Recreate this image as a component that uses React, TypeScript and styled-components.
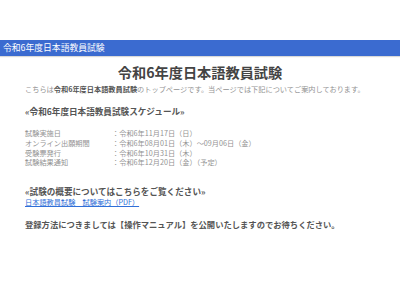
import { Fragment } from 'react'
import styled, { createGlobalStyle } from 'styled-components'

const GlobalStyle = createGlobalStyle`
  html, body {
    margin: 0;
    padding: 0;
    background: #ffffff;
  }
  body {
    font-family: "Noto Sans CJK JP", "Noto Sans", sans-serif;
  }
`

const Page = styled.div`
  width: 400px;
  height: 300px;
  padding-top: 40px;
  box-sizing: border-box;
  overflow: hidden;
`

const TopBar = styled.header`
  height: 16px;
  background-color: #3b6bd0;
  box-shadow: 0 1px 1px rgba(0, 0, 0, 0.15);
  display: flex;
  align-items: center;
  padding-left: 3px;
`

const TopBarTitle = styled.div`
  color: #ffffff;
  font-size: 8.8px;
  line-height: 1;
`

const Main = styled.main`
  padding: 7px 25px 0 25px;
`

const Title = styled.h1`
  margin: 0;
  text-align: center;
  font-size: 14.2px;
  font-weight: 700;
  color: #444444;
  line-height: 19px;
`

const Lead = styled.p`
  margin: 2px 0 0;
  font-size: 7.2px;
  line-height: 10px;
  color: #939393;
  white-space: nowrap;
  b {
    color: #555555;
  }
`

const SectionTitle = styled.h2<{ $gap: number }>`
  margin: ${({ $gap }) => $gap}px 0 0;
  font-size: 8.6px;
  font-weight: 700;
  line-height: 11px;
  color: #555555;
  white-space: nowrap;
`

const Schedule = styled.dl`
  margin: 12px 0 0;
  display: grid;
  grid-template-columns: 87px auto;
  grid-auto-rows: 9.8px;
  font-size: 7.2px;
  color: #939393;
`

const Term = styled.dt`
  margin: 0;
  line-height: 9.8px;
`

const Value = styled.dd`
  margin: 0;
  line-height: 9.8px;
  white-space: nowrap;
`

const PdfLink = styled.a`
  display: block;
  font-size: 7.2px;
  line-height: 10px;
  color: #2f6fd8;
  text-decoration: underline;
`

const Notice = styled.p`
  margin: 12px 0 0;
  font-size: 8.3px;
  font-weight: 700;
  line-height: 11px;
  color: #555555;
  white-space: nowrap;
`

const rows = [
  ['試験実施日', '：令和6年11月17日（日）'],
  ['オンライン出願期間', '：令和6年08月01日（木）～09月06日（金）'],
  ['受験票発行', '：令和6年10月31日（木）'],
  ['試験結果通知', '：令和6年12月20日（金）（予定）'],
]

export default function App() {
  return (
    <Page>
      <GlobalStyle />
      <TopBar>
        <TopBarTitle>令和6年度日本語教員試験</TopBarTitle>
      </TopBar>
      <Main>
        <Title>令和6年度日本語教員試験</Title>
        <Lead>
          こちらは<b>令和6年度日本語教員試験</b>のトップページです。当ページでは下記についてご案内しております。
        </Lead>
        <SectionTitle $gap={12}>«令和6年度日本語教員試験スケジュール»</SectionTitle>
        <Schedule>
          {rows.map(([k, v]) => (
            <Fragment key={k}>
              <Term>{k}</Term>
              <Value>{v}</Value>
            </Fragment>
          ))}
        </Schedule>
        <SectionTitle $gap={18}>«試験の概要についてはこちらをご覧ください»</SectionTitle>
        <PdfLink href="#">日本語教員試験　試験案内（PDF）</PdfLink>
        <Notice>登録方法につきましては【操作マニュアル】を公開いたしますのでお待ちください。</Notice>
      </Main>
    </Page>
  )
}
